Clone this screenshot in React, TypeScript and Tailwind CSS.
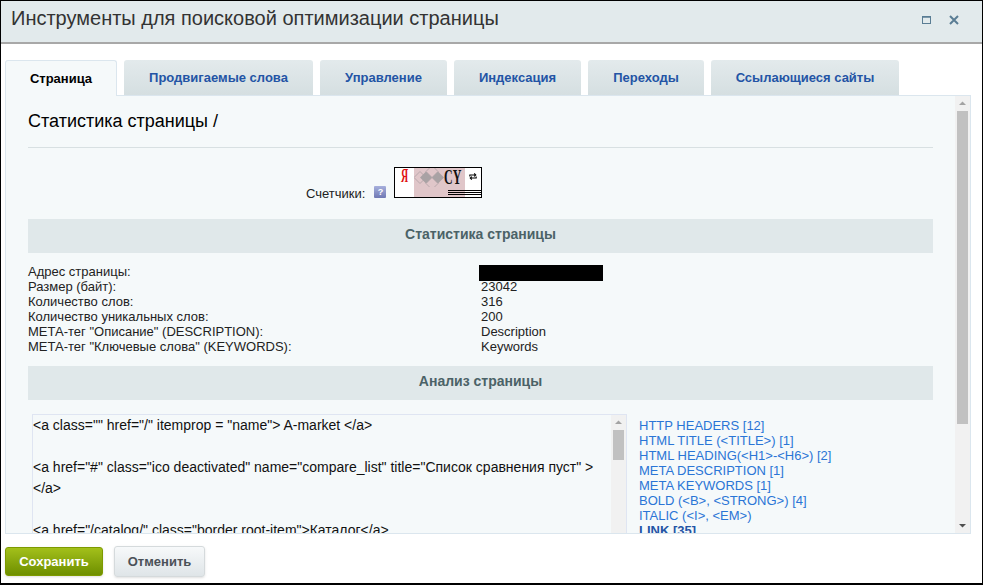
const font = { fontFamily: '"Liberation Sans", Arial, sans-serif' };

const tabs = [
  { label: "Продвигаемые слова", width: "w-[189px]" },
  { label: "Управление", width: "w-[127px]" },
  { label: "Индексация", width: "w-[127px]" },
  { label: "Переходы", width: "w-[116px]" },
  { label: "Ссылающиеся сайты", width: "w-[188px]" },
];

const stats = [
  ["Адрес страницы:", null],
  ["Размер (байт):", "23042"],
  ["Количество слов:", "316"],
  ["Количество уникальных слов:", "200"],
  ['МЕТА-тег "Описание" (DESCRIPTION):', "Description"],
  ['МЕТА-тег "Ключевые слова" (KEYWORDS):', "Keywords"],
];

const links = [
  "HTTP HEADERS [12]",
  "HTML TITLE (<TITLE>) [1]",
  "HTML HEADING(<H1>-<H6>) [2]",
  "META DESCRIPTION [1]",
  "META KEYWORDS [1]",
  "BOLD (<B>, <STRONG>) [4]",
  "ITALIC (<I>, <EM>)",
];

function Scrollbar({ thumbClass }: { thumbClass: string }) {
  return (
    <div className="flex h-full w-[15px] shrink-0 flex-col items-center bg-[#f1f1f1]">
      <svg width="15" height="15" viewBox="0 0 15 15" className="shrink-0">
        <path d="M4 9 L7.5 5.5 L11 9 Z" fill="#a3a3a3" />
      </svg>
      <div className={`w-[11px] bg-[#c1c1c1] ${thumbClass}`} />
      <div className="flex-1" />
      <svg width="15" height="15" viewBox="0 0 15 15" className="shrink-0">
        <path d="M4 6 L7.5 9.5 L11 6 Z" fill="#505050" />
      </svg>
    </div>
  );
}

function SectionBar({ title }: { title: string }) {
  return (
    <div className="flex h-[34px] items-center justify-center bg-[#e0e8ea] pb-[3px] text-[14px] font-bold text-[#4b6267]">
      {title}
    </div>
  );
}

function CounterBadge() {
  return (
    <div className="relative flex h-[31px] w-[88px] border border-black bg-white">
      <div className="flex w-[19px] justify-center">
        <span className="-mt-[2px] h-[20px] scale-x-[0.55] font-['Liberation_Serif'] text-[18px] font-bold leading-[20px] text-[#e01010]">Я</span>
      </div>
      <div className="relative w-[51px] bg-[#e0c6c9]">
        <svg width="30" height="19" viewBox="0 0 30 19" className="absolute left-0 top-0">
          <path d="M0 9.5 L6 3.5 L12 9.5 L6 15.5 Z M12 3.5 L18 -2.5 L24 3.5 L18 9.5 Z M12 15.5 L18 9.5 L24 15.5 L18 21.5 Z" stroke="#b9a8ac" strokeWidth="1" fill="none" />
          <path d="M12 3.5 L18 9.5 L12 15.5 L6 9.5 Z M24 3.5 L30 9.5 L24 15.5 L18 9.5 Z" fill="#a9a2a4" />
        </svg>
        <span className="absolute -top-[2px] right-[4px] origin-right scale-x-[0.57] font-['Liberation_Serif'] text-[21px] font-bold leading-[22px] text-[#111]">
          CY
        </span>
      </div>
      <div className="flex flex-1 justify-center pt-[4px]">
        <svg width="8" height="9" viewBox="0 0 10 10" fill="none" stroke="#000" strokeWidth="1.3">
          <path d="M1 5 V3 H8 M6.5 1 L8.5 3 L6.5 5 M9 5 V7 H2 M3.5 5 L1.5 7 L3.5 9" />
        </svg>
      </div>
      <div className="absolute bottom-[2px] right-0 flex w-[33px] flex-col gap-[1px]">
        <div className="h-px bg-black" />
        <div className="h-px bg-black" />
        <div className="h-px bg-black" />
      </div>
    </div>
  );
}

export default function App() {
  return (
    <div style={font} className="flex h-[585px] w-[983px] flex-col overflow-hidden border border-b-2 border-black bg-white">
      {/* Header */}
      <div className="flex h-[43px] shrink-0 items-center justify-between border-b-2 border-[#a8a8a8] bg-[#e2eaec] pl-[10px] pr-[23px]">
        <h1 className="relative -top-[4px] text-[20px] font-normal text-[#333]">Инструменты для поисковой оптимизации страницы</h1>
        <div className="relative -top-[2px] flex items-center gap-[18px]">
          <svg width="10" height="10" viewBox="0 0 10 10" fill="none">
            <rect x="1.5" y="1.5" width="8" height="7" stroke="#5a7d94" strokeWidth="1" />
            <path d="M1 2 H10" stroke="#5a7d94" strokeWidth="1.5" />
          </svg>
          <svg width="10" height="10" viewBox="0 0 10 10" fill="none">
            <path d="M1 1 L9 9 M9 1 L1 9" stroke="#5a7d94" strokeWidth="2" />
          </svg>
        </div>
      </div>

      {/* Body */}
      <div className="flex min-h-0 flex-1 flex-col px-[4px] pt-[16px]">
        <div className="relative z-10 flex h-[36px] shrink-0 text-[13px] font-bold">
          <div className="mr-[7px] flex h-[36px] w-[112px] items-center justify-center rounded-t-[3px] border border-b-0 border-[#dbe6ee] bg-[#f5f9fa] text-black">
            Страница
          </div>
          <div className="flex gap-[7px]">
            {tabs.map((tab) => (
              <div
                key={tab.label}
                className={`flex h-[35px] items-center justify-center rounded-t-[3px] bg-gradient-to-b from-[#e3eaec] to-[#d5dfe1] text-[#2354a5] ${tab.width}`}
              >
                {tab.label}
              </div>
            ))}
          </div>
        </div>

        <div className="-mt-px flex h-[439px] w-[966px] shrink-0 overflow-hidden border border-[#dbe6ee] bg-[#f5f9fa]">
          <div className="min-w-0 flex-1 pl-[22px] pr-[22px]">
            <h2 className="mt-[14px] text-[18px] font-normal leading-[22px] text-black">Статистика страницы /</h2>
            <div className="mt-[15px] h-px bg-[#d8e0e2]" />

            <div className="mt-[19px] flex h-[31px] items-end">
              <span className="mb-[-3px] ml-[278px] text-[13px] leading-[15px] text-[#222]">Счетчики:</span>
              <span className="mb-[0px] ml-[9px] flex h-[12px] w-[12px] items-center justify-center rounded-[1px] bg-gradient-to-b from-[#a7b0dc] to-[#7079b4] text-[9px] font-bold leading-none text-white">
                ?
              </span>
              <div className="ml-[8px]">
                <CounterBadge />
              </div>
            </div>

            <div className="mt-[21px]">
              <SectionBar title="Статистика страницы" />
            </div>

            <div className="mt-[11px] text-[13px] leading-[15px] text-[#222]">
              {stats.map(([name, value]) => (
                <div key={name} className="flex h-[15px]">
                  <div className="w-[453px] shrink-0">{name}</div>
                  {value ? <div>{value}</div> : <div className="mt-px h-[16px] w-[124px] -translate-x-[2px] bg-black" />}
                </div>
              ))}
            </div>

            <div className="mt-[12px]">
              <SectionBar title="Анализ страницы" />
            </div>

            <div className="mt-[14px] flex h-[200px] items-start">
              <div className="ml-[4px] flex h-full w-[595px] shrink-0 border border-[#dfe5f2]">
                <div className="min-w-0 flex-1 overflow-hidden text-[14px] leading-[21px] text-[#111]">
                  <div>&lt;a class="" href="/" itemprop = "name"&gt; A-market &lt;/a&gt;</div>
                  <div className="mt-[21px]">&lt;a href="#" class="ico deactivated" name="compare_list" title="Список сравнения пуст" &gt;</div>
                  <div>&lt;/a&gt;</div>
                  <div className="mt-[21px]">&lt;a href="/catalog/" class="border root-item"&gt;Каталог&lt;/a&gt;</div>
                </div>
                <Scrollbar thumbClass="h-[30px]" />
              </div>
              <div className="ml-[12px] pt-[4px] text-[13px] leading-[15px] text-[#2a75d6]">
                {links.map((link) => (
                  <div key={link}>{link}</div>
                ))}
                <div className="font-bold text-[#2354a5]">LINK [35]</div>
              </div>
            </div>
          </div>
          <Scrollbar thumbClass="h-[313px]" />
        </div>

        <div className="mt-[12px] flex shrink-0 items-center gap-[11px] text-[13px] font-bold">
          <button className="flex h-[29px] w-[98px] items-center justify-center rounded-[3px] border border-[#7d9a00] bg-gradient-to-b from-[#a3c01a] to-[#6e8f00] text-white shadow-sm">
            Сохранить
          </button>
          <button className="flex h-[31px] w-[91px] items-center justify-center rounded-[3px] border border-[#d5dadc] bg-gradient-to-b from-[#f7f9fa] to-[#dfe5e8] text-[#4b5157] shadow-sm">
            Отменить
          </button>
        </div>
      </div>
    </div>
  );
}
